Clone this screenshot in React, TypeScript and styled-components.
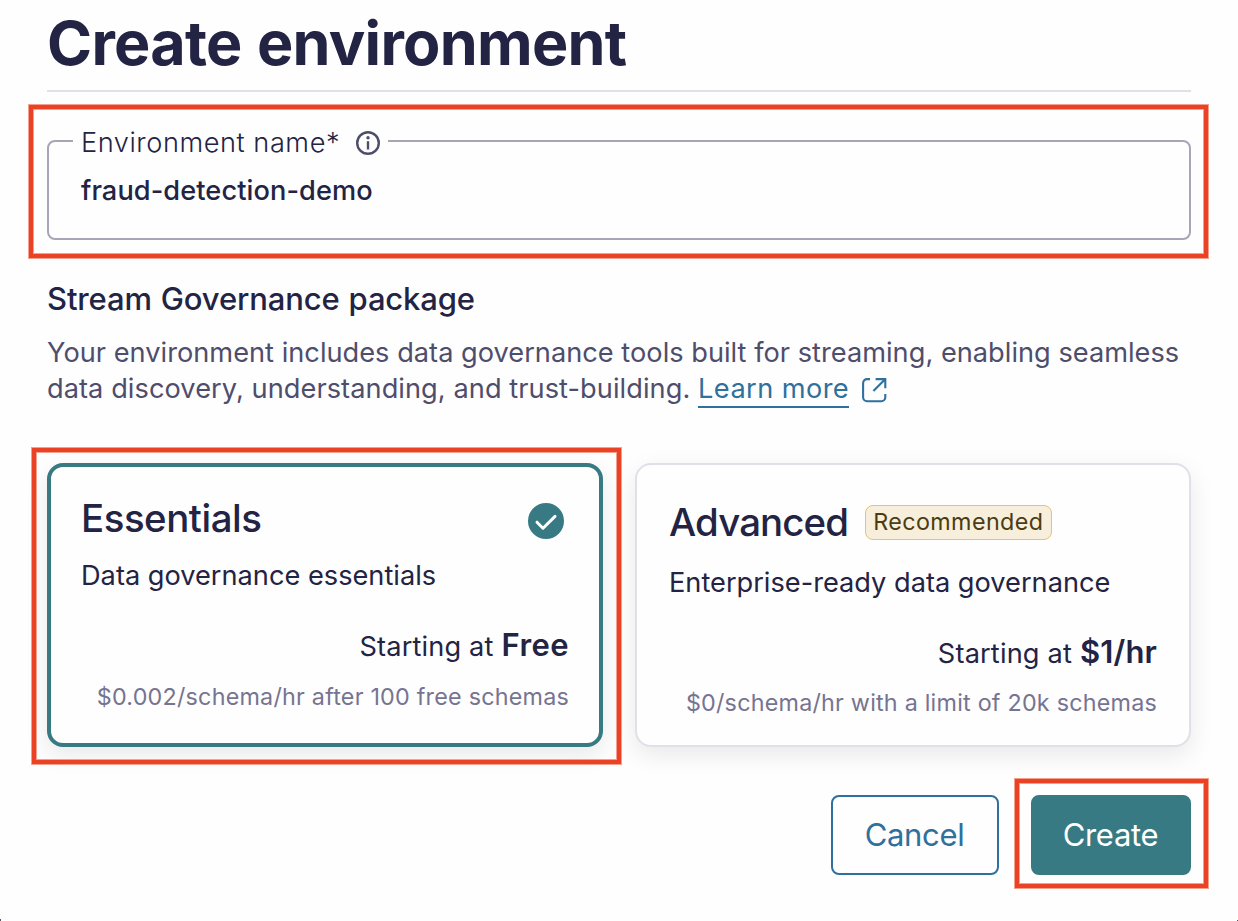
import React from "react";
import styled, { createGlobalStyle, css } from "styled-components";

const color = {
  ink: "#232344",
  body: "#4f4d6c",
  muted: "#767491",
  line: "#e0e0e8",
  field: "#a8a5b7",
  teal: "#377a83",
  link: "#2f709c",
  red: "#eb4226",
};

const GlobalStyle = createGlobalStyle`
  *, *::before, *::after { box-sizing: border-box; }
  body {
    margin: 0;
    background: #fefefe;
    color: ${color.ink};
    font-family: Inter, "Liberation Sans", sans-serif;
  }
  h1, h2, h3, p { margin: 0; }
  button { font-family: inherit; }
`;

const Page = styled.main`
  height: 921px;
  padding: 7px 47px 0;
  overflow: hidden;
  background:
    linear-gradient(#55556a, #55556a) left bottom / 1px 2px no-repeat,
    linear-gradient(#55556a, #55556a) right bottom / 1px 1px no-repeat,
    #fefefe;
`;

const Title = styled.h1`
  height: 85px;
  border-bottom: 2px solid ${color.line};
  font-size: 61px;
  line-height: 72px;
  font-weight: 700;
  letter-spacing: -0.72px;
  word-spacing: 1.6px;
`;

/* Red callout drawn over the page around the part it wraps. */
const Callout = styled.div<{ $inset: string }>`
  position: relative;
  &::after {
    content: "";
    position: absolute;
    inset: ${(p) => p.$inset};
    border: 4px solid ${color.red};
    box-shadow: 0 0 0 1px #f4a08f, inset 0 0 0 1px #f4a08f;
    pointer-events: none;
  }
`;

const Field = styled.div`
  display: flex;
  flex-direction: column;
  align-items: flex-start;
  height: 100px;
  margin-top: 48px;
  padding-left: 24px;
  border: 2px solid ${color.field};
  border-radius: 8px;
`;

const Label = styled.label`
  display: flex;
  align-items: center;
  justify-content: space-between;
  width: 315px;
  height: 36px;
  margin-top: -17px;
  padding: 0 8px;
  background: #fefefe;
  font-size: 27.2px;
  line-height: 36px;
  font-weight: 300;
  letter-spacing: 0.54px;
`;

const Value = styled.div`
  margin: 12px 0 0 8px;
  font-size: 27.2px;
  line-height: 36px;
  font-weight: 500;
  letter-spacing: 0.08px;
`;

const SectionTitle = styled.h2`
  margin-top: 39px;
  font-size: 31px;
  line-height: 40px;
  font-weight: 500;
  letter-spacing: -0.14px;
  word-spacing: 0.9px;
`;

const Intro = styled.p`
  margin-top: 16px;
  color: ${color.body};
  font-size: 27.2px;
  line-height: 36px;
  white-space: nowrap;
`;

const Line = styled.span<{ $spacing: string }>`
  display: flex;
  height: 36px;
  letter-spacing: ${(p) => p.$spacing};
  white-space: pre;
`;

const Link = styled.a`
  height: 37px;
  border-bottom: 2px solid ${color.link};
  color: ${color.link};
  letter-spacing: 0.42px;
`;

const LinkIcon = styled.svg`
  margin: 6px 0 0 12px;
`;

const Cards = styled.div`
  display: grid;
  grid-template-columns: 556px 556px;
  gap: 32px;
  margin-top: 56px;
`;

const Card = styled.section<{ $selected?: boolean }>`
  height: 284px;
  border-radius: 16px;
  box-shadow: 0 8px 24px rgba(0, 0, 0, 0.09);
  background: #fefefe;
  ${(p) =>
    p.$selected
      ? css`
          padding: 27px 30px 0;
          border: 4px solid ${color.teal};
        `
      : css`
          padding: 33px 32px 0;
          border: 2px solid ${color.line};
        `}
`;

const CardHead = styled.div<{ $spread?: boolean }>`
  display: flex;
  align-items: center;
  justify-content: ${(p) => (p.$spread ? "space-between" : "flex-start")};
  height: 48px;
`;

const CardTitle = styled.h3<{ $spacing: string }>`
  font-size: 38.4px;
  line-height: 48px;
  font-weight: 500;
  letter-spacing: ${(p) => p.$spacing};
`;

const Check = styled.svg`
  margin: 6px 5px 0 0;
`;

const Badge = styled.span`
  width: 187px;
  height: 35px;
  margin-left: 17px;
  padding-left: 7px;
  border: 1px solid #ecc262;
  border-radius: 8px;
  background: #f7efdb;
  color: #4c3c10;
  font-size: 23.3px;
  line-height: 32px;
  letter-spacing: 0.4px;
  white-space: nowrap;
`;

const Description = styled.p<{ $gap: number }>`
  margin-top: ${(p) => p.$gap}px;
  font-size: 27.2px;
  line-height: 36px;
`;

const Price = styled.div`
  display: flex;
  align-items: baseline;
  justify-content: flex-end;
  gap: 8px;
  height: 40px;
  margin-top: 31px;
  font-size: 27.2px;
  line-height: 40px;
  letter-spacing: 0.15px;
`;

const Amount = styled.strong<{ $spacing: string }>`
  font-size: 31px;
  font-weight: 600;
  letter-spacing: ${(p) => p.$spacing};
`;

const Note = styled.p<{ $gap: number }>`
  margin-top: ${(p) => p.$gap}px;
  color: ${color.muted};
  font-size: 23.3px;
  line-height: 32px;
  letter-spacing: 0.23px;
  text-align: right;
`;

const Actions = styled.div`
  display: flex;
  justify-content: flex-end;
  gap: 32px;
  margin-top: 48px;
`;

const Button = styled.button<{ $primary?: boolean }>`
  display: block;
  width: ${(p) => (p.$primary ? 160 : 168)}px;
  height: 80px;
  padding: 0 1px 2px 0;
  border: 2px solid ${(p) => (p.$primary ? color.teal : color.link)};
  border-radius: 8px;
  background: ${(p) => (p.$primary ? color.teal : "#fefefe")};
  color: ${(p) => (p.$primary ? "#fff" : color.link)};
  font-size: 31px;
  letter-spacing: -0.32px;
`;

export default function App() {
  return (
    <>
      <GlobalStyle />
      <Page>
        <Title>Create environment</Title>
        <Callout $inset="-35px -17px -18px -18px">
          <Field>
            <Label>
              Environment name*
              <svg width="24" height="24" viewBox="0 0 24 24" fill="none">
                <circle cx="12" cy="12" r="10.8" stroke={color.body} strokeWidth="2.4" />
                <circle cx="12" cy="6.8" r="1.7" fill={color.body} />
                <path d="M12 10.2v8.3" stroke={color.body} strokeWidth="2.4" />
              </svg>
            </Label>
            <Value>fraud-detection-demo</Value>
          </Field>
        </Callout>

        <SectionTitle>Stream Governance package</SectionTitle>
        <Intro>
          <Line $spacing="0.015px">
            Your environment includes data governance tools built for streaming, enabling seamless
          </Line>
          <Line $spacing="0.06px">
            {"data discovery, understanding, and trust-building. "}
            <Link>Learn more</Link>
            <LinkIcon width="26" height="26" viewBox="0 0 26 26" fill="none" stroke={color.link} strokeWidth="2.1">
              <path d="M9 2.1H6.1a4 4 0 0 0-4 4v14.2a4 4 0 0 0 4 4h14.2a4 4 0 0 0 4-4v-3.2" />
              <path d="M14.6 2.1h9.7v9.2M24.1 2.3 12.4 14" />
            </LinkIcon>
          </Line>
        </Intro>

        <Cards>
          <Callout $inset="-15px -18px -17px -15px">
            <Card $selected>
              <CardHead $spread>
                <CardTitle $spacing="-0.46px">Essentials</CardTitle>
                <Check width="36" height="36" viewBox="0 0 36 36" fill="none">
                  <circle cx="18" cy="18" r="18" fill={color.teal} />
                  <path
                    d="M9 19.2l6 6L27 13.4"
                    stroke="#fff"
                    strokeWidth="3"
                    strokeLinecap="round"
                    strokeLinejoin="round"
                  />
                </Check>
              </CardHead>
              <Description $gap={16}>Data governance essentials</Description>
              <Price>
                <span>Starting at</span>
                <Amount $spacing="0.4px">Free</Amount>
              </Price>
              <Note $gap={16}>$0.002/schema/hr after 100 free schemas</Note>
            </Card>
          </Callout>
          <Card>
            <CardHead>
              <CardTitle $spacing="-0.86px">Advanced</CardTitle>
              <Badge>Recommended</Badge>
            </CardHead>
            <Description $gap={19}>Enterprise-ready data governance</Description>
            <Price>
              <span>Starting at</span>
              <Amount $spacing="0.15px">$1/hr</Amount>
            </Price>
            <Note $gap={15}>$0/schema/hr with a limit of 20k schemas</Note>
          </Card>
        </Cards>

        <Actions>
          <Button>Cancel</Button>
          <Callout $inset="-16px -17px -13px -16px">
            <Button $primary>Create</Button>
          </Callout>
        </Actions>
      </Page>
    </>
  );
}
